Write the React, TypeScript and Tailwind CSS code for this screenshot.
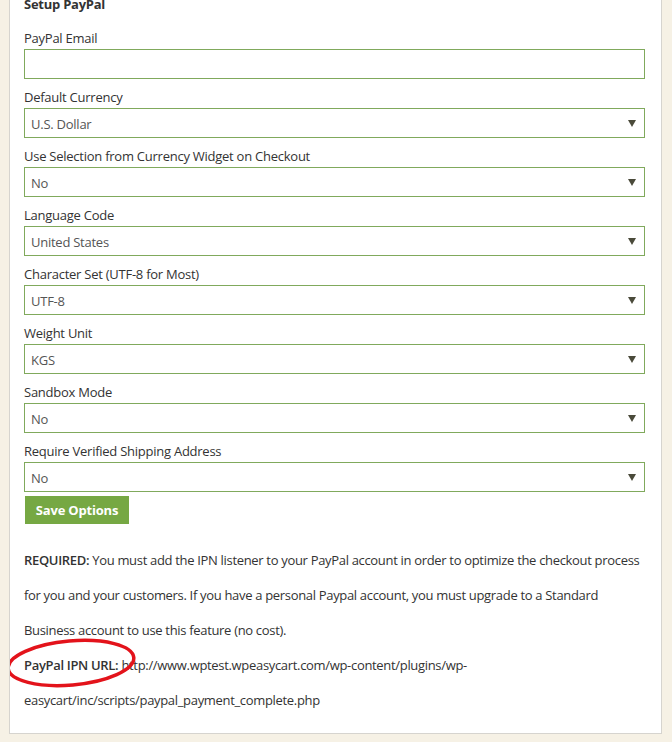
const fields = [
  { label: 'Default Currency', value: 'U.S. Dollar' },
  { label: 'Use Selection from Currency Widget on Checkout', value: 'No' },
  { label: 'Language Code', value: 'United States' },
  { label: 'Character Set (UTF-8 for Most)', value: 'UTF-8' },
  { label: 'Weight Unit', value: 'KGS' },
  { label: 'Sandbox Mode', value: 'No' },
  { label: 'Require Verified Shipping Address', value: 'No' },
]

function SelectBox({ value }: { value: string }) {
  return (
    <div className="flex h-[30px] items-center justify-between border border-[#80a95c] bg-white pl-[6px] pr-[8px] text-[13px] text-[#555]">
      <span className="mt-[3px]">{value}</span>
      <svg width="8" height="7" viewBox="0 0 8 7">
        <path d="M0 0 L8 0 L4 7 Z" fill="#4a4a3a" />
      </svg>
    </div>
  )
}

export default function App() {
  return (
    <div
      className="min-h-[742px] w-[672px] bg-[#f6f1e5] pl-[9px] pr-[10px] tracking-[-0.25px] text-[#333]"
      style={{ fontFamily: '"Open Sans", "Liberation Sans", sans-serif' }}
    >
      <div className="relative h-[734px] overflow-hidden border-x border-b border-[#d6d4cf] bg-white pl-[14px] pr-[16px]">
        <h2 className="-mt-[2px] text-[13px] font-bold leading-[13px] text-[#333]">Setup PayPal</h2>

        <div className="mt-[20px]">
          <div className="text-[13px] leading-[14px]">PayPal Email</div>
          <div className="mt-[4px] h-[30px] border border-[#80a95c] bg-white" />
        </div>

        {fields.map((f) => (
          <div key={f.label} className="mt-[11px]">
            <div className="text-[13px] leading-[14px]">{f.label}</div>
            <div className="mt-[4px]">
              <SelectBox value={f.value} />
            </div>
          </div>
        ))}

        <button className="mt-[4px] ml-[1px] h-[28px] w-[104px] bg-[#76a843] text-[13px] font-bold tracking-[-0.2px] text-white">
          <span className="relative top-[1px]">Save Options</span>
        </button>

        <div className="relative mt-[19px] text-[13px] leading-[35px] tracking-[-0.32px] text-[#333]">
          <div className="whitespace-nowrap">
            <b className="font-semibold">REQUIRED:</b> You must add the IPN listener to your PayPal account in order to optimize the checkout process
          </div>
          <div className="whitespace-nowrap">
            for you and your customers. If you have a personal Paypal account, you must upgrade to a Standard
          </div>
          <div className="whitespace-nowrap">Business account to use this feature (no cost).</div>
          <div className="whitespace-nowrap">
            <b className="font-semibold">PayPal IPN URL:</b> http://www.wptest.wpeasycart.com/wp-content/plugins/wp-
          </div>
          <div className="whitespace-nowrap">easycart/inc/scripts/paypal_payment_complete.php</div>

          <svg
            className="absolute left-[-19px] top-[95px]"
            width="132"
            height="50"
            viewBox="0 0 132 50"
          >
            <ellipse
              cx="66"
              cy="25"
              rx="63"
              ry="22"
              transform="rotate(-5 66 25)"
              fill="none"
              stroke="#e3131b"
              strokeWidth="3.5"
            />
          </svg>
        </div>
      </div>
    </div>
  )
}
